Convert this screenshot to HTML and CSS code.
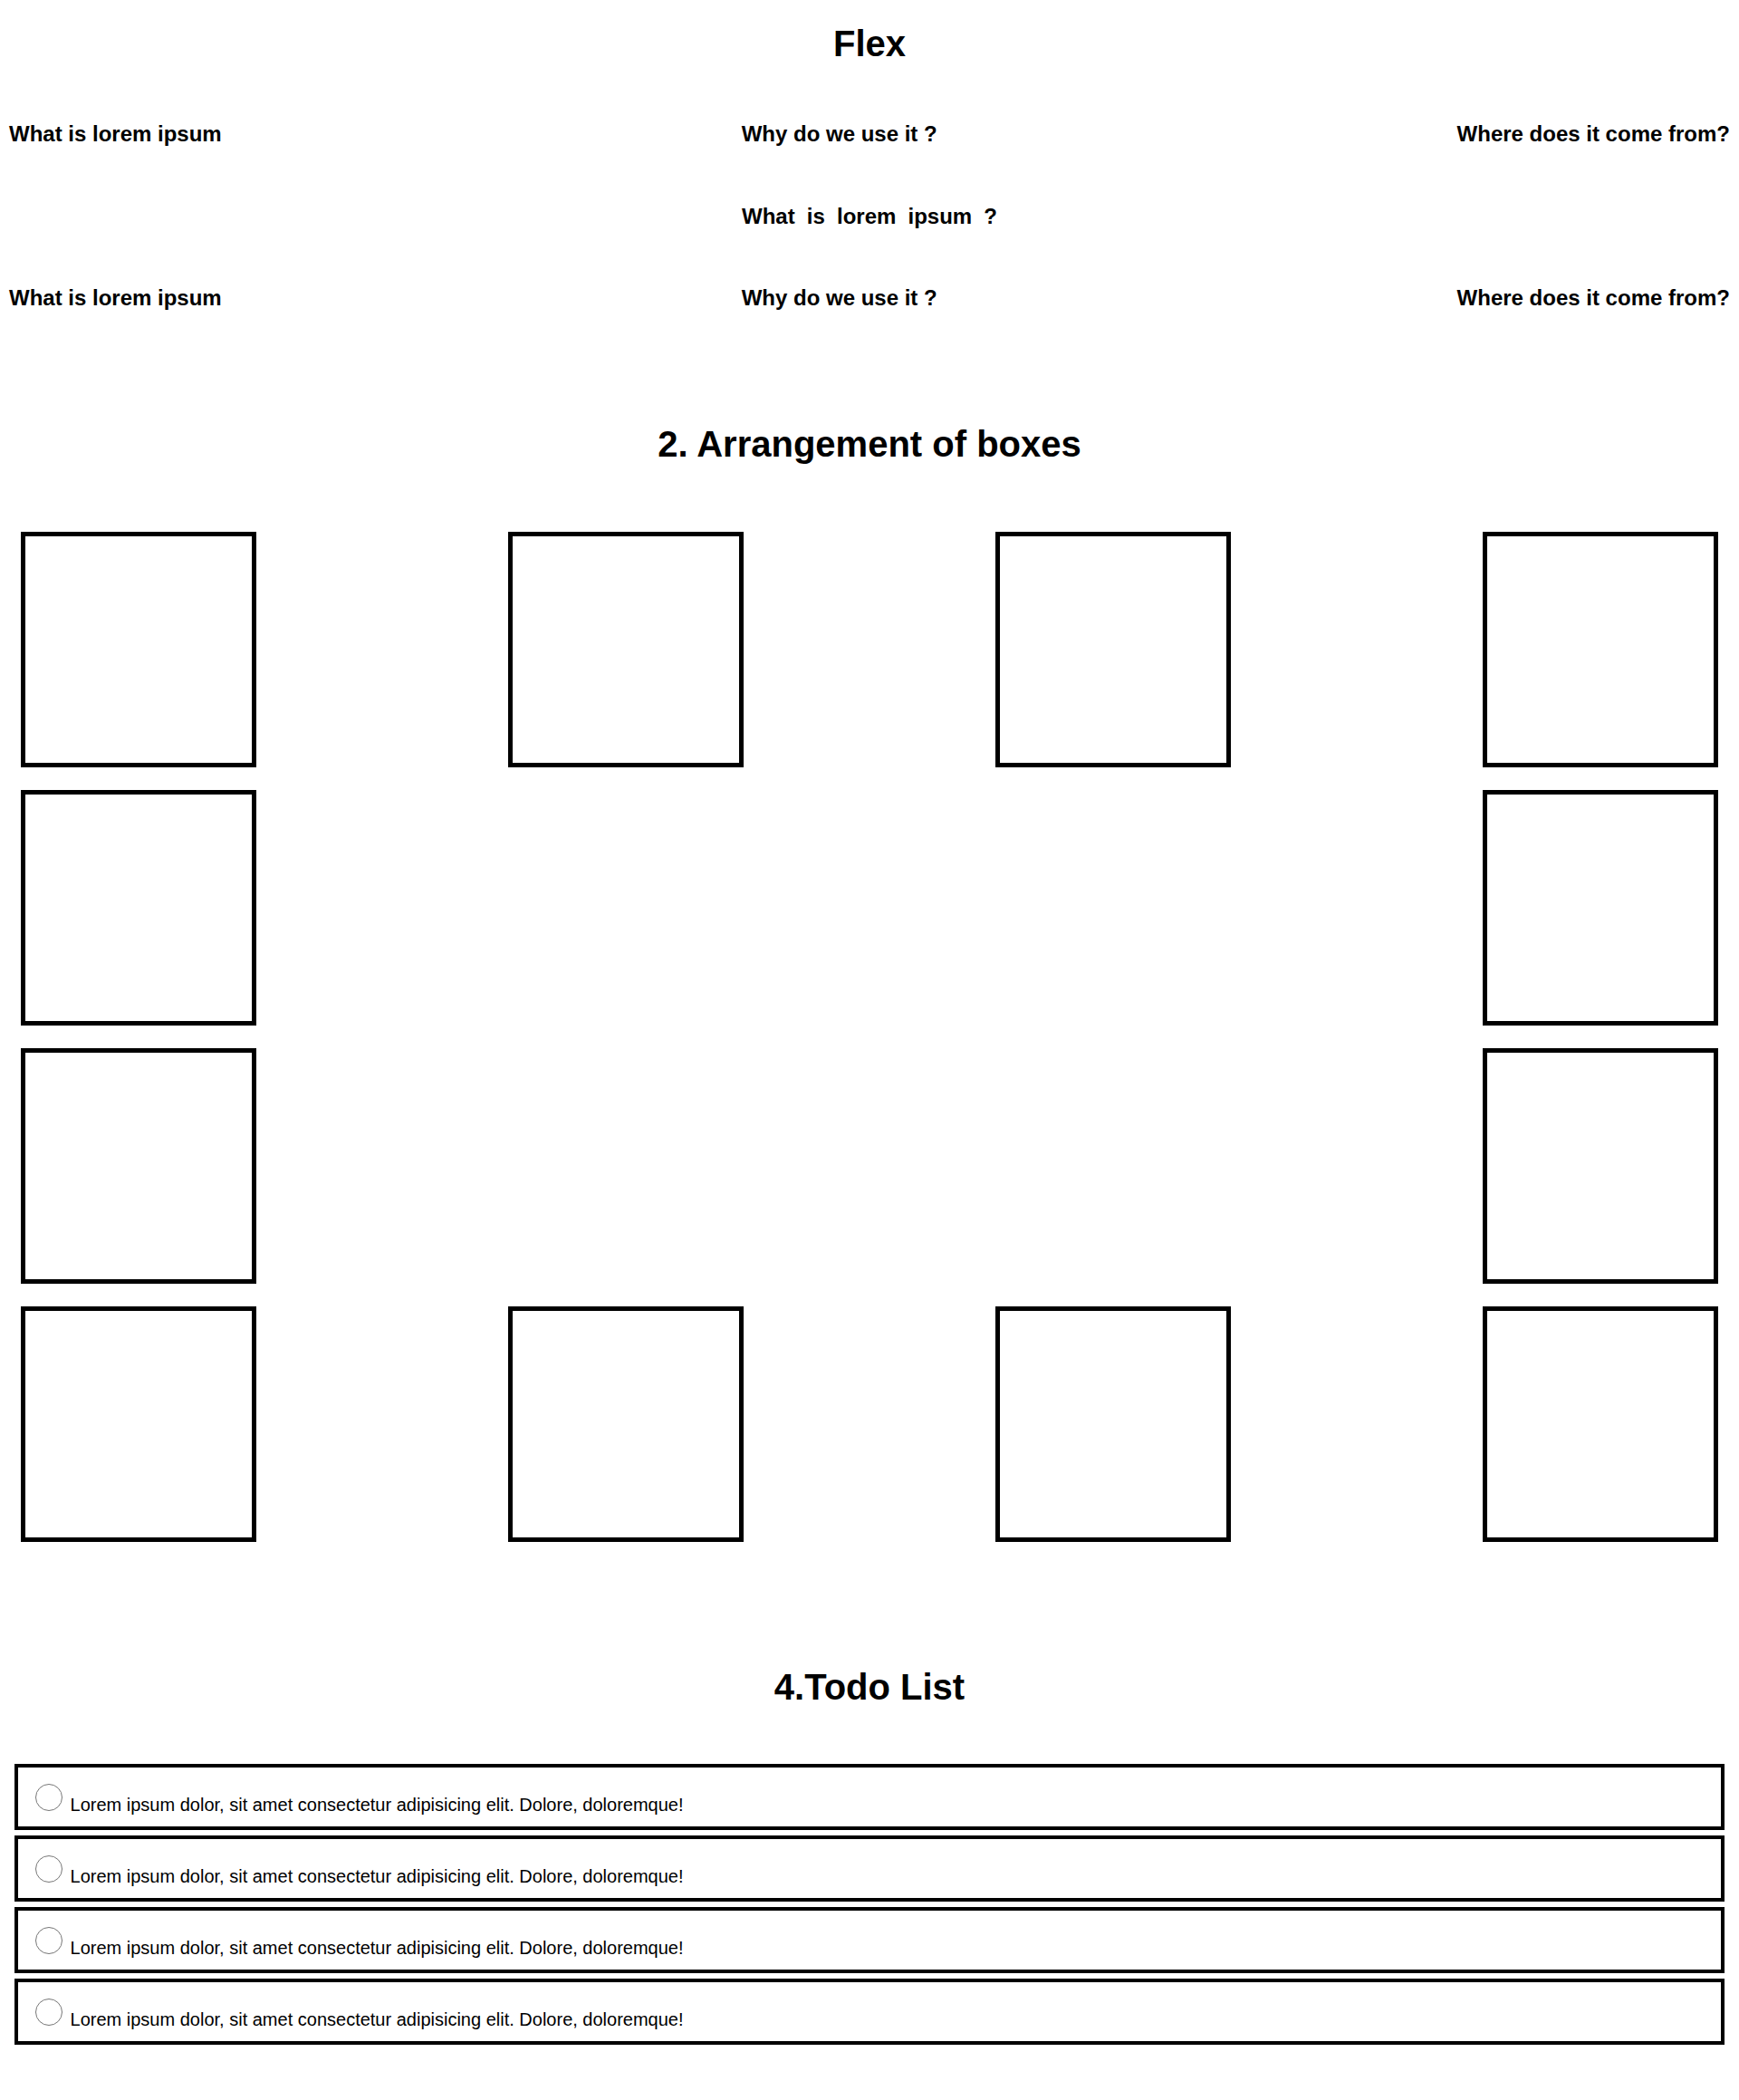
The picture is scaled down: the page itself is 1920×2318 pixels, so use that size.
FILE: index.html
```html
<html>
<head>
  <meta name="viewport" content="width=device-width, initial-scale=1.0">
  <link rel="stylesheet" href="styles.css">
</head>
<body>

  <!-- 1. flex -->
  <h1 class="title">Flex</h1>
  <div class="row">
    <p class="q">What is lorem ipsum</p>
    <p class="q">Why do we use it ?</p>
    <p class="q">Where does it come from?</p>
  </div>
  <div class="row center">
    <p class="q wide">What is lorem ipsum ?</p>
  </div>
  <div class="row">
    <p class="q">What is lorem ipsum</p>
    <p class="q">Why do we use it ?</p>
    <p class="q">Where does it come from?</p>
  </div>

  <!-- 2. boxes -->
  <h2 class="title boxes-title">2. Arrangement of boxes</h2>
  <div class="boxes">
    <div class="box"></div>
    <div class="box"></div>
    <div class="box"></div>
    <div class="box"></div>

    <div class="box"></div>
    <div class="box last"></div>

    <div class="box"></div>
    <div class="box last"></div>

    <div class="box"></div>
    <div class="box"></div>
    <div class="box"></div>
    <div class="box"></div>
  </div>

  <!-- 4. todo -->
  <h2 class="title todo-title">4.Todo List</h2>
  <div class="todo">
    <div class="item"><input type="radio"> Lorem ipsum dolor, sit amet consectetur adipisicing elit. Dolore, doloremque!</div>
    <div class="item"><input type="radio"> Lorem ipsum dolor, sit amet consectetur adipisicing elit. Dolore, doloremque!</div>
    <div class="item"><input type="radio"> Lorem ipsum dolor, sit amet consectetur adipisicing elit. Dolore, doloremque!</div>
    <div class="item"><input type="radio"> Lorem ipsum dolor, sit amet consectetur adipisicing elit. Dolore, doloremque!</div>
  </div>

</body>
</html>
```

FILE: styles.css
```css
body {
  margin: 8px;
  font-family: "Liberation Sans", Arial, sans-serif;
  color: #000;
}

/* headings */
.title {
  margin: 17px 0 32px;
  font-size: 40px;
  line-height: 46px;
  font-weight: bold;
  text-align: center;
}

.boxes-title {
  margin: 92px 0 74px;
}

.todo-title {
  margin: 137px 0 62px;
}

/* flex rows */
.row {
  display: flex;
  justify-content: space-between;
  padding: 31px 2px 31.5px;
}

.row.center {
  justify-content: center;
}

.q {
  margin: 0;
  font-size: 24px;
  line-height: 28px;
  font-weight: bold;
}

.q.wide {
  word-spacing: 6.5px;
}

/* boxes */
.boxes {
  display: grid;
  grid-template-columns: repeat(4, 260px);
  justify-content: space-between;
  row-gap: 25px;
  padding: 0 15px;
}

.box {
  box-sizing: border-box;
  height: 260px;
  border: 5px solid #000;
}

.box.last {
  grid-column: 4;
}

/* todo */
.todo {
  display: flex;
  flex-direction: column;
  gap: 6px;
  padding: 0 8px;
}

.item {
  border: 4px solid #000;
  padding: 15.5px 14px 11.5px;
  font-size: 20px;
}

.item input {
  width: 30px;
  height: 30px;
  margin: 3px 3px 0 5px;
}
```
